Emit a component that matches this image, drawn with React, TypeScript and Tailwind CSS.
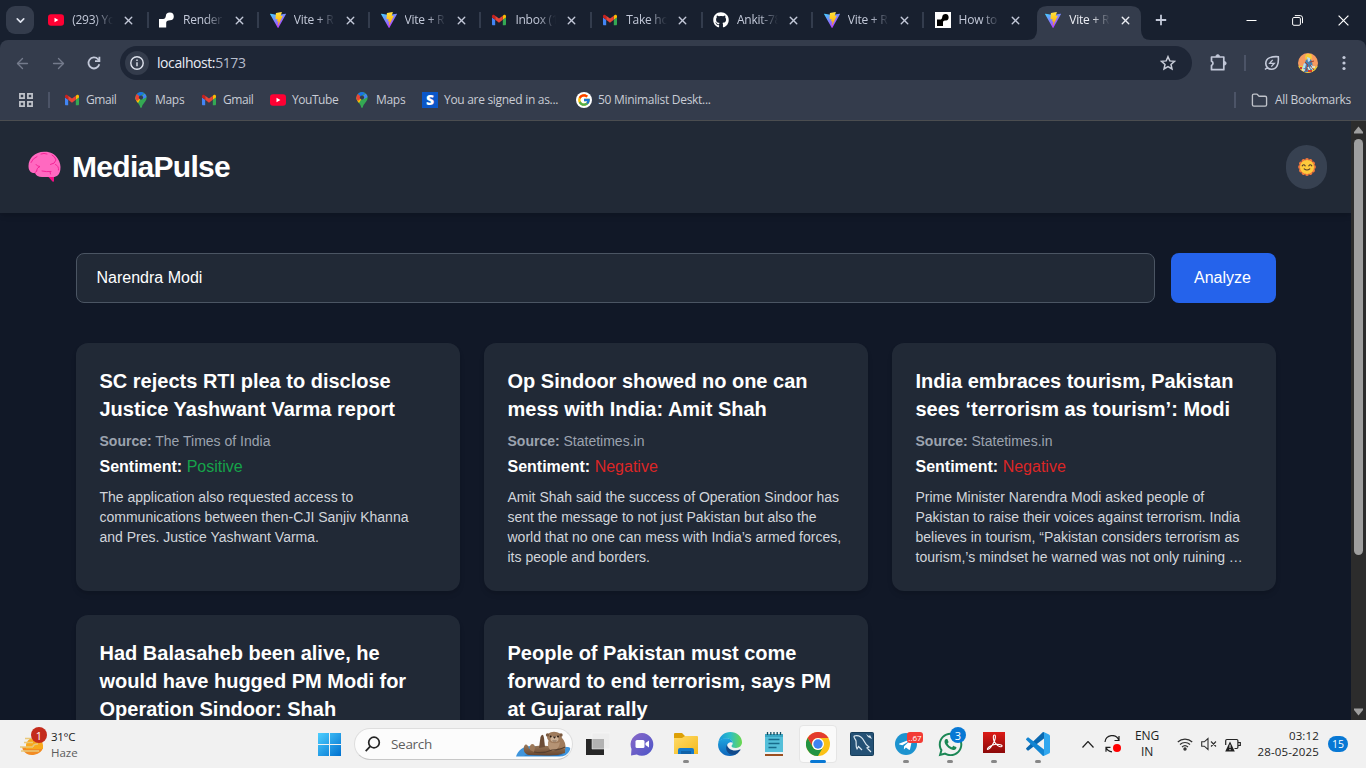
import React from "react";
import { ArrowLeft, ArrowRight, ChevronDown, Folder, X } from "lucide-react";
import { FaGithub, FaTelegramPlane, FaWhatsapp } from "react-icons/fa";
import { FcGoogle } from "react-icons/fc";

function ViteIcon() {
  return (
    <svg className="h-4 w-4" viewBox="0 0 256 257">
      <defs>
        <linearGradient id="viteA" x1="0" y1="0" x2=".6" y2="1">
          <stop offset="0" stopColor="#41d1ff" />
          <stop offset="1" stopColor="#bd34fe" />
        </linearGradient>
        <linearGradient id="viteB" x1=".4" y1="0" x2=".5" y2="1">
          <stop offset="0" stopColor="#ffea83" />
          <stop offset=".1" stopColor="#ffdd35" />
          <stop offset="1" stopColor="#ffa800" />
        </linearGradient>
      </defs>
      <path fill="url(#viteA)" d="M255.153 37.938L134.897 252.976c-2.483 4.44-8.862 4.466-11.382.048L.875 37.958c-2.746-4.814 1.371-10.646 6.827-9.67l120.385 21.517a6.537 6.537 0 0 0 2.322-.004l117.867-21.483c5.438-.991 9.574 4.796 6.877 9.62Z" />
      <path fill="url(#viteB)" d="M185.432.063L96.44 17.501a3.268 3.268 0 0 0-2.634 3.014l-5.474 92.456a3.268 3.268 0 0 0 3.997 3.378l24.777-5.718c2.318-.535 4.413 1.507 3.936 3.838l-7.361 36.047c-.495 2.426 1.782 4.5 4.151 3.78l15.304-4.649c2.372-.72 4.652 1.36 4.15 3.788l-11.698 56.621c-.732 3.542 3.979 5.473 5.943 2.437l1.313-2.028l72.516-144.72c1.215-2.423-.88-5.186-3.54-4.672l-25.505 4.922c-2.396.462-4.435-1.77-3.759-4.114l16.646-57.705c.677-2.35-1.37-4.583-3.769-4.113Z" />
    </svg>
  );
}

function GmailIcon() {
  return (
    <svg className="h-4 w-4 p-px" viewBox="52 42 88 66">
      <path fill="#4285f4" d="M58 108h14V74L52 59v43c0 3.32 2.69 6 6 6" />
      <path fill="#34a853" d="M120 108h14c3.32 0 6-2.69 6-6V59l-20 15" />
      <path fill="#fbbc04" d="M120 48v26l20-15v-8c0-7.42-8.47-11.65-14.4-7.2" />
      <path fill="#ea4335" d="M72 74V48l24 18 24-18v26L96 92" />
      <path fill="#c5221f" d="M52 51v8l20 15V48l-5.6-4.2c-5.94-4.45-14.4-.22-14.4 7.2" />
    </svg>
  );
}

function YouTubeIcon() {
  return (
    <svg className="h-4 w-4" viewBox="0 0 16 16">
      <rect x="0" y="2.3" width="16" height="11.4" rx="3" fill="#ff0033" />
      <path d="M6.5 5.7v4.6L10.4 8z" fill="#fff" />
    </svg>
  );
}

function MapsIcon() {
  return (
    <svg className="h-4 w-4" viewBox="0 0 16 16">
      <defs>
        <clipPath id="pin">
          <path d="M8 0a5.6 5.6 0 0 0-5.6 5.6c0 2 .8 3.300 2 4.700C6 12.300 6.800 13.600 7.200 15.200q.8 1.600 1.600 0c.4-1.600 1.200-2.900 2.800-4.900 1.200-1.400 2-2.700 2-4.700A5.600 5.600 0 0 0 8 0z" />
        </clipPath>
      </defs>
      <g clipPath="url(#pin)">
        <path d="M0 0h16v16H0z" fill="#34a853" />
        <path d="M0 13 5 11 8 6 3 4z" fill="#fbbc04" />
        <path d="M8 5.600 3.500 1.200 0 5l4 4z" fill="#ea4335" />
        <path d="M3.600 1.800 7 4.500 12.500 0H5z" fill="#1a73e8" />
        <path d="M7 6 12.400.8 16 4l-6 3z" fill="#4285f4" />
      </g>
      <circle cx="8" cy="5.600" r="2.100" fill="#343c4c" />
    </svg>
  );
}

function RenderIcon({ dark = false }: { dark?: boolean }) {
  return (
    <svg className="h-4 w-4" viewBox="0 0 16 16">
      {dark && <path d="M0 0h16v16H0z" fill="#fff" />}
      <path
        fill={dark ? "#000" : "#fff"}
        d={dark
          ? "M10.800 2A3.500 3.500 0 0 0 7.200 5.200C7 6.600 6.200 7.500 5 7.500H2V14h6v-3.200c0-1.500.7-2.200 2-2.300h1A3.300 3.300 0 0 0 10.800 2z"
          : "M10.800 .5A3.900 3.900 0 0 0 6.800 4.200C6.600 5.800 5.600 7 4.200 7H0v8.500h7.200V11c0-1.500.9-2.400 2.300-2.600l1.500-.1A3.900 3.900 0 0 0 10.800.5z"}
      />
    </svg>
  );
}

const tabs = [
  { icon: <YouTubeIcon />, title: "(293) Yo" },
  { icon: <RenderIcon />, title: "Render" },
  { icon: <ViteIcon />, title: "Vite + R" },
  { icon: <ViteIcon />, title: "Vite + R" },
  { icon: <GmailIcon />, title: "Inbox (1" },
  { icon: <GmailIcon />, title: "Take ho" },
  { icon: <FaGithub className="h-4 w-4 text-white" />, title: "Ankit-78" },
  { icon: <ViteIcon />, title: "Vite + R" },
  { icon: <RenderIcon dark />, title: "How to" },
  { icon: <ViteIcon />, title: "Vite + R", active: true },
];

function TabStrip() {
  return (
    <div className="flex h-10 shrink-0 items-end bg-[#18202f]">
      <div className="flex h-10 w-[38px] shrink-0 items-center pl-1.5">
        <div className="flex h-7 w-7 items-center justify-center rounded-[9px] bg-[#343c4c]">
          <ChevronDown size={13} strokeWidth={3} className="text-[#dfe3ee]" />
        </div>
      </div>
      {tabs.map((t, i) => (
        <div key={i} className="relative flex h-10 w-[110.8px] shrink-0 items-center pl-[10.2px]">
          {t.active && (
            <svg className="absolute bottom-0 left-[-8px] h-[34px] w-[124px]" viewBox="0 0 124 34">
              <path d="M0 34q10 0 10-10V10Q10 0 20 0h84q10 0 10 10v14q0 10 10 10z" fill="#343c4c" />
            </svg>
          )}
          <span className="relative flex h-4 w-4 shrink-0">{t.icon}</span>
          <span className={"relative ml-2 w-[41px] whitespace-nowrap text-[12px] leading-4 tracking-[-0.25px] [mask-image:linear-gradient(to_right,black_55%,transparent)] " + (t.active ? "text-[#eceef4]" : "text-[#c3c9d9]")}>
            {t.title}
          </span>
          <X size={13} strokeWidth={2.600} className={"relative ml-[9px] shrink-0 " + (t.active ? "text-[#eceef4]" : "text-[#c3c9d9]")} />
          {i < 8 && <span className="ml-[11.500px] h-4 w-0.5 shrink-0 bg-[#333c4d]" />}
        </div>
      ))}
      <div className="flex h-10 flex-1 items-center">
        <svg className="ml-[9px] h-3 w-3" viewBox="0 0 12 12" stroke="#c3c9d9" strokeWidth="1.800"><path d="M6 .8v10.400M.8 6h10.400" /></svg>
        <div className="ml-auto flex items-center gap-[35px] pr-[17px] text-white">
          <svg className="h-[11px] w-[11px]" viewBox="0 0 11 11" stroke="currentColor"><path d="M.5 5.500h10" /></svg>
          <svg className="h-[11px] w-[11px]" viewBox="0 0 11 11" stroke="currentColor" fill="none">
            <rect x=".6" y="2.500" width="7.800" height="7.800" rx="1.300" />
            <path d="M2.800.6h5.400q2.300 0 2.300 2.300v5.300" />
          </svg>
          <svg className="h-[11px] w-[11px]" viewBox="0 0 11 11" stroke="currentColor" strokeWidth="1.200"><path d="m.6.6 9.800 9.800m0-9.800L.6 10.400" /></svg>
        </div>
      </div>
    </div>
  );
}

function AddressBar() {
  return (
    <div className="bg-[#18202f]">
      <div className="flex h-[46px] items-center rounded-t-[8px] bg-[#343c4c] pl-[14px] text-[#c3c9d9]">
        <ArrowLeft size={17} className="text-[#747b8c]" strokeWidth={1.900} />
        <ArrowRight size={17} className="ml-[19px] text-[#747b8c]" strokeWidth={1.900} />
        <svg className="ml-[19px] h-4 w-4" viewBox="0 0 16 16" fill="none" stroke="currentColor" strokeWidth="1.800">
          <path d="M13.300 9.300A5.500 5.500 0 1 1 12 4.200l1.500 1.500" />
          <path d="M13.400 1.800v4.400H9" />
        </svg>
        <div className="ml-[18px] flex h-[34px] w-[1072px] items-center rounded-full bg-[#1e2636] pl-[5px] pr-4">
          <span className="flex h-6 w-6 items-center justify-center rounded-full bg-[#343c4c]">
            <svg className="h-3.5 w-3.5" viewBox="0 0 14 14" fill="none" stroke="#dfe3ee" strokeWidth="1.400">
              <circle cx="7" cy="7" r="6.200" />
              <path d="M7 6.300v4M7 3.500v1.400" />
            </svg>
          </span>
          <span className="ml-2 text-[14px] leading-5 tracking-[-0.42px] text-[#e8ebf4]">localhost:<span className="text-[#b6bdcd]">5173</span></span>
          <svg className="ml-auto h-4 w-4" viewBox="0 0 16 16" fill="none" stroke="#c8ccd8" strokeWidth="1.500">
            <path d="m8 1.700 1.800 4.200 4.700.4-3.500 3.100 1 4.600L8 11.600 4 14l1-4.600-3.500-3.100 4.700-.4z" />
          </svg>
        </div>
        <svg className="ml-[18px] h-[18px] w-[18px]" viewBox="0 0 18 18" fill="none" stroke="currentColor" strokeWidth="1.700" strokeLinejoin="round">
          <path d="M1.500 3h12.300v12.700H1.500v-4.200a2.300 2.300 0 0 0 0-4.300z" />
          <path d="M5.900 2.500a1.800 1.800 0 0 1 3.600 0zM14.300 7.500a1.800 1.800 0 0 1 0 3.600z" fill="currentColor" strokeWidth="1" />
        </svg>
        <span className="ml-4 h-4 w-0.5 bg-[#4c5467]" />
        <svg className="ml-[18px] h-4 w-4" viewBox="0 0 16 16" fill="none" stroke="currentColor" strokeWidth="1.600">
          <path d="M14.300 1.700C7 1.200 1.800 3 1.800 8.500a5.600 5.600 0 0 0 5.700 5.700c5.500 0 7.400-5.500 6.800-12.500zM3.700 12.200 1 14.500" />
          <path d="m8.700 4.800-3 3.500h4.600l-3 3.300" strokeWidth="1.300" />
        </svg>
        <svg className="ml-[18px] h-5 w-5" viewBox="0 0 20 20">
          <defs><clipPath id="avatar"><circle cx="10" cy="10" r="10" /></clipPath></defs>
          <g clipPath="url(#avatar)">
            <path d="M0 0h20v20H0z" fill="#f69a60" />
            <path d="M0 13q5-1 10 2l10-2v7H0z" fill="#e8ca37" />
            <path d="M8 1h5l1 3-1 3H8L7 4z" fill="#f6cb38" />
            <path d="m8 7 3-2 3 3 1 8-3 3H6l-1-5z" fill="#477eaf" />
            <path d="m9 4 3 1v3l-2 1zM6 10l2 1-1 4-3 1zM13 12l2 1v4l-3-2z" fill="#b8def2" />
            <path d="m12 9 4-1M7 9l3 3-2 6m4-6 4 5" stroke="#a13f36" strokeWidth="1" fill="none" />
            <path d="M4 17h3m3-3 2 4m2-4h3" stroke="#e5eadb" strokeWidth="1.500" />
            <path d="M2 15h2m6 3h4" stroke="#d3382b" strokeWidth="2" />
          </g>
        </svg>
        <svg className="ml-[18px] h-4 w-4" viewBox="0 0 16 16" fill="currentColor">
          <circle cx="8" cy="2.500" r="1.600" /><circle cx="8" cy="8" r="1.600" /><circle cx="8" cy="13.500" r="1.600" />
        </svg>
      </div>
    </div>
  );
}

function Bookmark({ icon, label, cls }: { icon: React.ReactNode; label: string; cls: string }) {
  return (
    <div className={"flex shrink-0 items-center " + cls}>
      <span className="mr-[6px] flex h-4 w-4 shrink-0">{icon}</span>
      <span className="whitespace-nowrap">{label}</span>
    </div>
  );
}

function BookmarksBar() {
  return (
    <div className="flex h-[35px] shrink-0 items-center border-b border-[#4b4d50] bg-[#343c4c] pb-1.5 pl-[19px] text-[12px] tracking-[-0.3px] text-[#c9ccd5]">
      <svg className="h-3.5 w-3.5 shrink-0" viewBox="0 0 14 14" fill="none" stroke="#c0c3ca" strokeWidth="1.700">
        <path d="M.9.9h4.200v4.200H.9zM8.900.9h4.200v4.200H8.900zM.9 8.900h4.200v4.200H.9zM8.900 8.900h4.200v4.200H8.900z" />
      </svg>
      <span className="ml-[15px] h-4 w-0.5 bg-[#4c5467]" />
      <Bookmark icon={<GmailIcon />} label="Gmail" cls="ml-[14px] w-[69px] tracking-[-0.45px]" />
      <Bookmark icon={<MapsIcon />} label="Maps" cls="w-[68px]" />
      <Bookmark icon={<GmailIcon />} label="Gmail" cls="w-[69px] tracking-[-0.45px]" />
      <Bookmark icon={<YouTubeIcon />} label="YouTube" cls="w-[84px] tracking-[-0.45px]" />
      <Bookmark icon={<MapsIcon />} label="Maps" cls="w-[68px]" />
      <Bookmark
        icon={<span className="flex h-4 w-4 items-center justify-center bg-[#0b57c8] text-[14px] font-extrabold leading-none text-white">S</span>}
        label="You are signed in as..."
        cls="w-[154px]"
      />
      <Bookmark
        icon={<span className="flex h-4 w-4 items-center justify-center rounded-full bg-white"><FcGoogle size={14} /></span>}
        label="50 Minimalist Deskt..."
        cls=""
      />
      <div className="ml-auto flex items-center pr-[15px]">
        <span className="h-4 w-0.5 bg-[#4c5467]" />
        <Folder size={17} strokeWidth={1.900} className="ml-[15px] mr-[7px] text-[#c0c3ca]" />
        <span>All Bookmarks</span>
      </div>
    </div>
  );
}

const articles = [
  {
    title: ["SC rejects RTI plea to disclose", "Justice Yashwant Varma report"],
    source: "The Times of India",
    sentiment: "Positive",
    text: ["The application also requested access to", "communications between then-CJI Sanjiv Khanna", "and Pres. Justice Yashwant Varma."],
  },
  {
    title: ["Op Sindoor showed no one can", "mess with India: Amit Shah"],
    source: "Statetimes.in",
    sentiment: "Negative",
    text: ["Amit Shah said the success of Operation Sindoor has", "sent the message to not just Pakistan but also the", "world that no one can mess with India’s armed forces,", "its people and borders."],
  },
  {
    title: ["India embraces tourism, Pakistan", "sees ‘terrorism as tourism’: Modi"],
    source: "Statetimes.in",
    sentiment: "Negative",
    text: ["Prime Minister Narendra Modi asked people of", "Pakistan to raise their voices against terrorism. India", "believes in tourism, “Pakistan considers terrorism as", "tourism,’s mindset he warned was not only ruining …"],
  },
  { title: ["Had Balasaheb been alive, he", "would have hugged PM Modi for", "Operation Sindoor: Shah"] },
  { title: ["People of Pakistan must come", "forward to end terrorism, says PM", "at Gujarat rally"] },
];

function BrainIcon() {
  return (
    <svg className="h-8 w-[33px]" viewBox="0 0 33 32">
      <path d="M20 25.500h6v4q0 2-1.500 1z" fill="#f50d86" />
      <path d="M16 .8C22 .5 27 3 30 8c2 3 3 7 2.300 11-.7 4.500-3.300 7-7.300 7H14c-3.500 0-6-1.200-7-4-4.500.3-6.500-2.500-6.500-7C.5 7 7 1 16 .8z" fill="#ff69c0" />
      <path d="M3 11.500Q4.500 7.500 9 5.500M13 3q3-1.300 6 0M24 4q3 1.500 4 5-1 4-5.500 4.500M30.500 19q.5-4-3-5.500M8 13.500q1 2 4 2-3 1-3.500 4M14 20q4 1 9 .5m-1 0 .5 2.500M9 20l-2 1.500" fill="none" stroke="#f52497" strokeWidth="1" strokeLinecap="round" />
    </svg>
  );
}

function SunIcon() {
  return (
    <svg className="h-[18px] w-[18px]" viewBox="-9 -9 18 18">
      <g fill="#f5793a">
        {[0, 30, 60, 90, 120, 150, 180, 210, 240, 270, 300, 330].map((a) => (
          <circle key={a} r="1.900" cy="-7" transform={`rotate(${a})`} />
        ))}
      </g>
      <circle r="7" fill="#fdcb3c" />
      <path d="M-4.800-1.200q1.500-2 3 0M1.800-1.200q1.500-2 3 0M-2.800 1.800Q0 4.300 2.800 1.800" stroke="#533c27" fill="none" strokeWidth="1.100" strokeLinecap="round" />
    </svg>
  );
}

function MediaPulse() {
  return (
    <div className="flex min-w-0 flex-1 flex-col overflow-hidden bg-[#111827] font-['Liberation_Sans',Arial,sans-serif]">
      <header className="z-10 flex h-[92px] shrink-0 items-center justify-between bg-[#212936] px-6 shadow-md">
        <h1 className="flex items-center text-3xl font-bold tracking-[-0.7px] text-white">
          <span className="w-12 pl-1"><BrainIcon /></span>MediaPulse
        </h1>
        <button className="flex h-11 w-[41px] items-center justify-center rounded-full bg-[#374151]"><SunIcon /></button>
      </header>
      <main className="ml-[76px] w-[1200px] pt-10">
        <div className="flex gap-4">
          <input readOnly value="Narendra Modi" className="h-[50px] min-w-0 flex-1 rounded-lg border border-[#4b5563] bg-[#212936] px-[19.500px] text-base text-white outline-none" />
          <button className="h-[50px] w-[105px] rounded-lg bg-[#2563eb] pr-0.5 text-base text-white">Analyze</button>
        </div>
        <div className="mt-10 grid grid-cols-3 gap-6">
          {articles.map((a) => (
            <article key={a.title[0]} className="min-h-[248px] rounded-xl bg-[#212936] py-6 pl-[23.500px] shadow-md">
              <h2 className="whitespace-nowrap text-xl font-bold leading-7 text-white">
                {a.title.map((l) => <span key={l} className="block">{l}</span>)}
              </h2>
              {a.source && (
                <>
                  <p className="mt-2 text-sm text-[#9ca3af]"><b>Source:</b> {a.source}</p>
                  <p className="mt-1 text-base text-white">
                    <b>Sentiment:</b>{" "}
                    <span className={a.sentiment === "Positive" ? "text-[#16a34a]" : "text-[#dc2626]"}>{a.sentiment}</span>
                  </p>
                  <p className="mt-2 whitespace-nowrap text-sm text-[#d1d5db]">
                    {a.text.map((l) => <span key={l} className="block">{l}</span>)}
                  </p>
                </>
              )}
            </article>
          ))}
        </div>
      </main>
    </div>
  );
}

function Scrollbar() {
  return (
    <div className="flex w-[15px] shrink-0 flex-col items-center bg-[#2c2c2c] pb-1 pt-[5px]">
      <svg className="h-2 w-[9px] shrink-0" viewBox="0 0 9 8"><path d="M4.500.500 9 6v1.500H0V6z" fill="#9f9f9f" /></svg>
      <span className="mt-[5px] h-[416px] w-[9px] shrink-0 rounded-full bg-[#9f9f9f]" />
      <svg className="mt-auto h-2 w-[9px] shrink-0" viewBox="0 0 9 8"><path d="M4.500 7.500 9 2V.500H0V2z" fill="#9f9f9f" /></svg>
    </div>
  );
}

function Otter() {
  return (
    <svg className="h-[27px] w-[55px]" viewBox="0 0 55 27">
      <defs>
        <linearGradient id="fur" x1="0" y1="0" x2="0" y2="1"><stop stopColor="#a88565" /><stop offset="1" stopColor="#68472f" /></linearGradient>
      </defs>
      <path d="M0 25.500C2 19 7 15.500 15 15l37 1q3.500 0 1.500 4-3 5.500-10 5.500z" fill="#3f95dc" />
      <path d="M8 24.500q4-2 10-2h26l3 1-5 1.500z" fill="#2673bc" />
      <path d="M16 16q7-2.500 16-1l4-4h8q6 4 5 11-8 3-18 2.500L13 24q-4-1-5-4-1-5 1.500-6.500Q12 13 13 18z" fill="url(#fur)" />
      <path d="M14 19q-1-5 2-6 3 0 3 4l-1 4z" fill="#9d795a" />
      <path d="M24.500 6q2.500-5 3.500 1l1 9-6 1z" fill="#6d4d37" />
      <path d="M31 7Q31 .8 38 .8T46 7q4 4 3.500 11L36 16z" fill="#9f7b5c" />
      <circle cx="31.500" cy="4" r="1.700" fill="#7b5a40" /><circle cx="45" cy="4" r="1.700" fill="#7b5a40" />
      <path d="M32 10q6 4 12 1-1 8-7 9-6-1-5-10z" fill="#b59374" />
      <ellipse cx="38.500" cy="8" rx="4" ry="3" fill="#cdb196" />
      <circle cx="34.700" cy="5.500" r=".9" fill="#25170f" /><circle cx="42" cy="5.500" r=".9" fill="#25170f" />
      <path d="M36.700 5.600h3.500l-1.700 2.200zM36 9.700q2.500 1 5 0" fill="#33231b" />
      <path d="M18 21q9 2 18-2 8 0 13-3" stroke="#57402f" fill="none" strokeWidth="1.200" />
    </svg>
  );
}

function ChromeLogo() {
  return (
    <svg className="h-6 w-6" viewBox="0 0 24 24">
      <circle cx="12" cy="12" r="12" fill="#fbc116" />
      <path d="M1.600 6A12 12 0 0 1 22.400 6H12a6 6 0 0 0-5.200 9z" fill="#e33b2e" />
      <path d="M1.600 6A12 12 0 0 0 12 24l5.200-9A6 6 0 0 1 6.800 15z" fill="#229342" />
      <circle cx="12" cy="12" r="6" fill="#fff" /><circle cx="12" cy="12" r="4.700" fill="#3f83f1" />
    </svg>
  );
}

function EdgeLogo() {
  return (
    <svg className="h-6 w-6" viewBox="0 0 24 24">
      <defs>
        <linearGradient id="edgeTop" x1="0" x2="1"><stop stopColor="#1795db" /><stop offset=".5" stopColor="#2dbfc8" /><stop offset="1" stopColor="#6bd84b" /></linearGradient>
        <linearGradient id="edgeSide" x1="0" y1="0" x2="0" y2="1"><stop stopColor="#1fa5df" /><stop offset="1" stopColor="#0e65bb" /></linearGradient>
      </defs>
      <path d="M.3 10.500C1.500 4 6.500 0 12.300 0 19 0 24 4.700 24 10.300c0 3.500-2.700 5.700-6 5.700-3 0-4.500-1-4.500-2 0-.7 1.200-1.200 1.200-3C14.700 8.500 12 6.500 8.500 6.500S1.500 8 .3 10.500z" fill="url(#edgeTop)" />
      <path d="M.1 12C.5 8 4.300 6.300 8.300 6.300c4 0 6.400 2.300 6.400 4.700-.8-1.500-5.700-1-5.700 3.500 0 5.500 5.500 9 10.800 6.500C17.500 23 15 24 12 24 5 24-.5 18.500.1 12z" fill="url(#edgeSide)" />
      <path d="M9 12.500c-3 6 2.500 11.700 8.500 9.900A12 12 0 0 0 22.500 18c.3-.5-.2-.8-.8-.5-6 2.800-12.500-.7-12.700-5z" fill="#114a8b" />
    </svg>
  );
}

function TaskItem({ children, dot = false, active = false }: { children: React.ReactNode; dot?: boolean; active?: boolean }) {
  return (
    <div className="relative flex h-12 w-11 shrink-0 items-center justify-center">
      {active && <span className="absolute left-[3px] top-[5px] h-[38px] w-[38px] rounded border border-[#e5e5e5] bg-[#fafafa]" />}
      <span className="relative flex h-6 w-6 items-center justify-center">{children}</span>
      {dot && <span className="absolute bottom-[5px] left-[19px] h-[3px] w-1.5 rounded-full bg-[#878787]" />}
      {active && <span className="absolute bottom-[5px] left-[14px] h-[3px] w-4 rounded-full bg-[#0878d4]" />}
    </div>
  );
}

function Taskbar() {
  return (
    <div className="flex h-12 shrink-0 items-center bg-[#f1f1f1] text-[#1d1d1d]">
      <div className="flex w-[307px] shrink-0 items-center pl-5">
        <span className="relative h-8 w-[31px]">
          <svg className="h-8 w-[27px]" viewBox="0 0 27 32">
            <path d="M2 19h21a10.500 8.500 0 0 1-20 3z" fill="#f28c24" />
            <path d="M6 19a8.500 8.500 0 0 1 17-2v4H6z" fill="#f8a81c" />
            <path d="M5 10.500h9M4 14.500h9M0 19h13M1 23h18M13 19q0-3 5-3" stroke="#e9c87a" strokeWidth="1.700" fill="none" />
          </svg>
          <span className="absolute -top-px left-[11px] flex h-4 w-4 items-center justify-center rounded-full bg-[#c42b1c] text-[11px] leading-none text-white">1</span>
        </span>
        <span className="relative top-px text-[11.500px] leading-4 tracking-[-0.3px]">31°C<br /><span className="tracking-normal text-[#5c5c5c]">Haze</span></span>
      </div>
      <TaskItem>
        <svg className="h-[23px] w-[23px]" viewBox="0 0 23 23">
          <defs><linearGradient id="win" x1="0" y1="0" x2="1" y2="1"><stop stopColor="#4dcfff" /><stop offset="1" stopColor="#0070cf" /></linearGradient></defs>
          <path d="M0 0h11v11H0zM12 0h11v11H12zM0 12h11v11H0zM12 12h11v11H12z" fill="url(#win)" />
        </svg>
      </TaskItem>
      <div className="ml-[3px] flex h-8 w-[219px] shrink-0 items-center rounded-full border border-[#dedede] border-b-[#c8c8c8] bg-[#fcfcfc]">
        <svg className="ml-[10px] h-4 w-4" viewBox="0 0 16 16" fill="none" stroke="#252525" strokeWidth="1.700"><circle cx="9" cy="6.500" r="5.300" /><path d="m5.200 10.400-4.500 4.800" /></svg>
        <span className="ml-[10px] text-[13.500px] tracking-[-0.3px] text-[#5e5e5e]">Search</span>
        <span className="ml-auto mr-px"><Otter /></span>
      </div>
      <div className="ml-[3px] flex">
        <TaskItem>
          <svg className="h-6 w-6" viewBox="0 0 24 24">
            <path d="M0 7h18v16H0z" fill="#272727" /><path d="M6 1h18v16H6z" fill="#ededed" /><path d="M6 7h12v10H6z" fill="#b2b2b2" /><path d="M6 1h18v16H6z" stroke="#fafafa" fill="none" strokeWidth=".5" />
          </svg>
        </TaskItem>
        <TaskItem>
          <svg className="h-6 w-6" viewBox="0 0 24 24">
            <defs><linearGradient id="chat" x1="0" y1="0" x2="1" y2="1"><stop stopColor="#8a68c8" /><stop offset="1" stopColor="#4c55c8" /></linearGradient></defs>
            <path d="M12 1a11.400 11.400 0 1 1-5.200 21.600L1 23.500 1.500 17A11.500 11.500 0 0 1 12 1z" fill="url(#chat)" />
            <rect x="5.500" y="8" width="9" height="8" rx="1.500" fill="#fff" /><path d="m15.500 11 3.500-2.500v7L15.500 13z" fill="#fff" />
          </svg>
        </TaskItem>
        <TaskItem dot>
          <svg className="h-6 w-6" viewBox="0 0 24 24">
            <defs><linearGradient id="fold" x1="0" y1="0" x2="1" y2="1"><stop stopColor="#ffdb68" /><stop offset="1" stopColor="#f4b91c" /></linearGradient></defs>
            <path d="M0 2q0-1 1-1h7l3 3h12v7H0z" fill="#dda006" /><path d="M0 6h8l3-2h12q1 0 1 1v17H0z" fill="url(#fold)" />
            <path d="M4 22v-4q0-2 2-2h12q2 0 2 2v4z" fill="#1479ca" /><path d="M7 19h10v3H7z" fill="#0f61a8" />
          </svg>
        </TaskItem>
        <TaskItem><EdgeLogo /></TaskItem>
        <TaskItem>
          <svg className="h-6 w-6" viewBox="0 0 24 24">
            <path d="M3 2h18v19H3z" fill="#54bfd9" /><path d="M3 2h18v3H3z" fill="#3aa5c2" /><path d="M3 20h18v1.500H3z" fill="#e9f4f6" /><path d="M3 22h18v2H3z" fill="#9b4f20" />
            <path d="M6.500 7.500h11M6.500 11.500h11M6.500 15.500h8" stroke="#176b8c" strokeWidth="1.700" />
            <path d="M5.500 0v3M8.800 0v3M12 0v3M15.200 0v3M18.500 0v3" stroke="#164e61" strokeWidth="1.300" />
          </svg>
        </TaskItem>
        <TaskItem active><ChromeLogo /></TaskItem>
        <TaskItem>
          <svg className="h-6 w-6" viewBox="0 0 24 24">
            <rect x=".5" y=".5" width="23" height="23" rx="1" fill="#245175" stroke="#173e5b" />
            <path d="M4 4c4-1 8 1 10 5 1.500 3 3 5 5 6l-2 1 4 4M4 4c-.5 2 1.500 3 2 5 .5 3-.5 6 1 8l1.500-2.500L12 18" fill="none" stroke="#dbe8f0" strokeWidth="1.200" />
            <path d="m16 2 2 3 4 2-2-4-1 1z" fill="#dbe8f0" />
          </svg>
        </TaskItem>
        <TaskItem dot>
          <span className="flex h-[22px] w-[22px] items-center justify-center rounded-full bg-[#1d93cf] pr-0.5 text-white"><FaTelegramPlane size={15} /></span>
          <span className="absolute -right-[5px] top-0 flex h-[11px] w-4 items-center justify-center rounded-[3px] bg-[#f33b35] text-[8px] leading-none text-white">..67</span>
        </TaskItem>
        <TaskItem dot>
          <FaWhatsapp size={27} className="shrink-0 text-[#1b8755]" />
          <span className="absolute -right-[4px] -top-[5px] flex h-4 w-4 items-center justify-center rounded-full bg-[#0878d4] text-[11px] leading-none text-white">3</span>
        </TaskItem>
        <TaskItem dot>
          <span className="mb-1 flex h-[21px] w-[22px] items-center justify-center bg-gradient-to-b from-[#dd1c18] to-[#8c0909] text-white">
            <svg className="h-[17px] w-[17px]" viewBox="0 0 17 17" fill="none" stroke="currentColor" strokeWidth="1.100"><path d="M8 7C7 4 7 1 8.500 1s1 4-.5 7c-2 4-4 7-6.300 7.500C0 15 5 10.500 10 10.300c5-.2 7 1.200 5.700 2.200-2 1-5.700-1.500-7.700-5.500z" /></svg>
          </span>
        </TaskItem>
        <TaskItem dot>
          <svg className="h-6 w-6" viewBox="0 0 24 24">
            <path d="m17 0 1 .1v6.500L2.800 18.300Q2 19 1.300 18.300L.3 17.300q-.6-.7.1-1.400z" fill="#0a68b0" />
            <path d="m17 24 1-.1v-6.500L2.800 5.700Q2 5 1.300 5.700L.3 6.700q-.6.700.1 1.400z" fill="#1385d2" />
            <path d="M17 0q.3-.1.700.1L23 2.600q1 .5 1 1.500v15.800q0 1-1 1.500l-5.300 2.500q-.4.200-.7.100 1-.3 1-1.500v-21Q18 .3 17 0z" fill="#30a7ef" />
          </svg>
        </TaskItem>
      </div>
      <div className="ml-auto flex items-center pr-[18px]">
        <svg className="h-[7px] w-3" viewBox="0 0 12 7" fill="none" stroke="#202020" strokeWidth="1.200"><path d="m.5 6.500 5.500-6 5.500 6" /></svg>
        <svg className="ml-[10px] h-[18px] w-[18px]" viewBox="0 0 18 18" fill="none" stroke="#202020" strokeWidth="1.200">
          <path d="M1 7A7.200 7.200 0 0 1 14.800 5M15 1v4.500h-4.500M2 16.800v-4.500h4.500M2 12.500a7 7 0 0 0 6 4.300" /><circle cx="13" cy="13" r="4" fill="#f00" stroke="none" />
        </svg>
        <span className="ml-2 w-[34px] text-center text-[12px] leading-4 tracking-[-0.2px]">ENG<br />IN</span>
        <svg className="ml-[13px] h-4 w-4" viewBox="0 0 16 16" fill="none" stroke="#303030" strokeWidth="1.200">
          <path d="M.8 6a10.500 10.500 0 0 1 14.400 0M3 8.500a7.300 7.300 0 0 1 10 0M5 11a4.400 4.400 0 0 1 6 0" /><circle cx="8" cy="13" r="1.100" fill="#303030" />
        </svg>
        <svg className="ml-2 h-4 w-4" viewBox="0 0 16 16" fill="none" stroke="#303030" strokeWidth="1.100"><path d="M.7 5.800h2.600L7 2.500v11l-3.700-3.300H.7zM10 5.500l5 5m0-5-5 5" /></svg>
        <svg className="ml-2 h-4 w-4" viewBox="0 0 16 16" fill="none" stroke="#252525" strokeWidth="1.200">
          <path d="M.7 9V4.700q0-1.200 1.200-1.200h9.800q1.200 0 1.200 1.200v6.600q0 1.200-1.200 1.200H9.500M13.500 6.500h1.800v3h-1.800" />
          <path d="M5 5.500 9.800 15.500H.2z" fill="#202020" stroke="none" /><path d="M5 8.700v3.300m0 1v1.200" stroke="#fff" strokeWidth="1" />
        </svg>
        <span className="ml-[13px] w-[65px] text-right text-[11.500px] leading-4 tracking-[0.15px]">03:12<br />28-05-2025</span>
        <span className="ml-[9px] flex h-4 w-5 items-center justify-center rounded-full bg-[#0878d4] text-[10.500px] leading-none text-white">15</span>
      </div>
    </div>
  );
}

export default function App() {
  return (
    <div className="flex h-[768px] w-[1366px] flex-col overflow-hidden bg-[#111827] font-['Open_Sans','Noto_Sans',sans-serif]">
      <TabStrip />
      <AddressBar />
      <BookmarksBar />
      <div className="flex min-h-0 flex-1">
        <MediaPulse />
        <Scrollbar />
      </div>
      <Taskbar />
    </div>
  );
}
